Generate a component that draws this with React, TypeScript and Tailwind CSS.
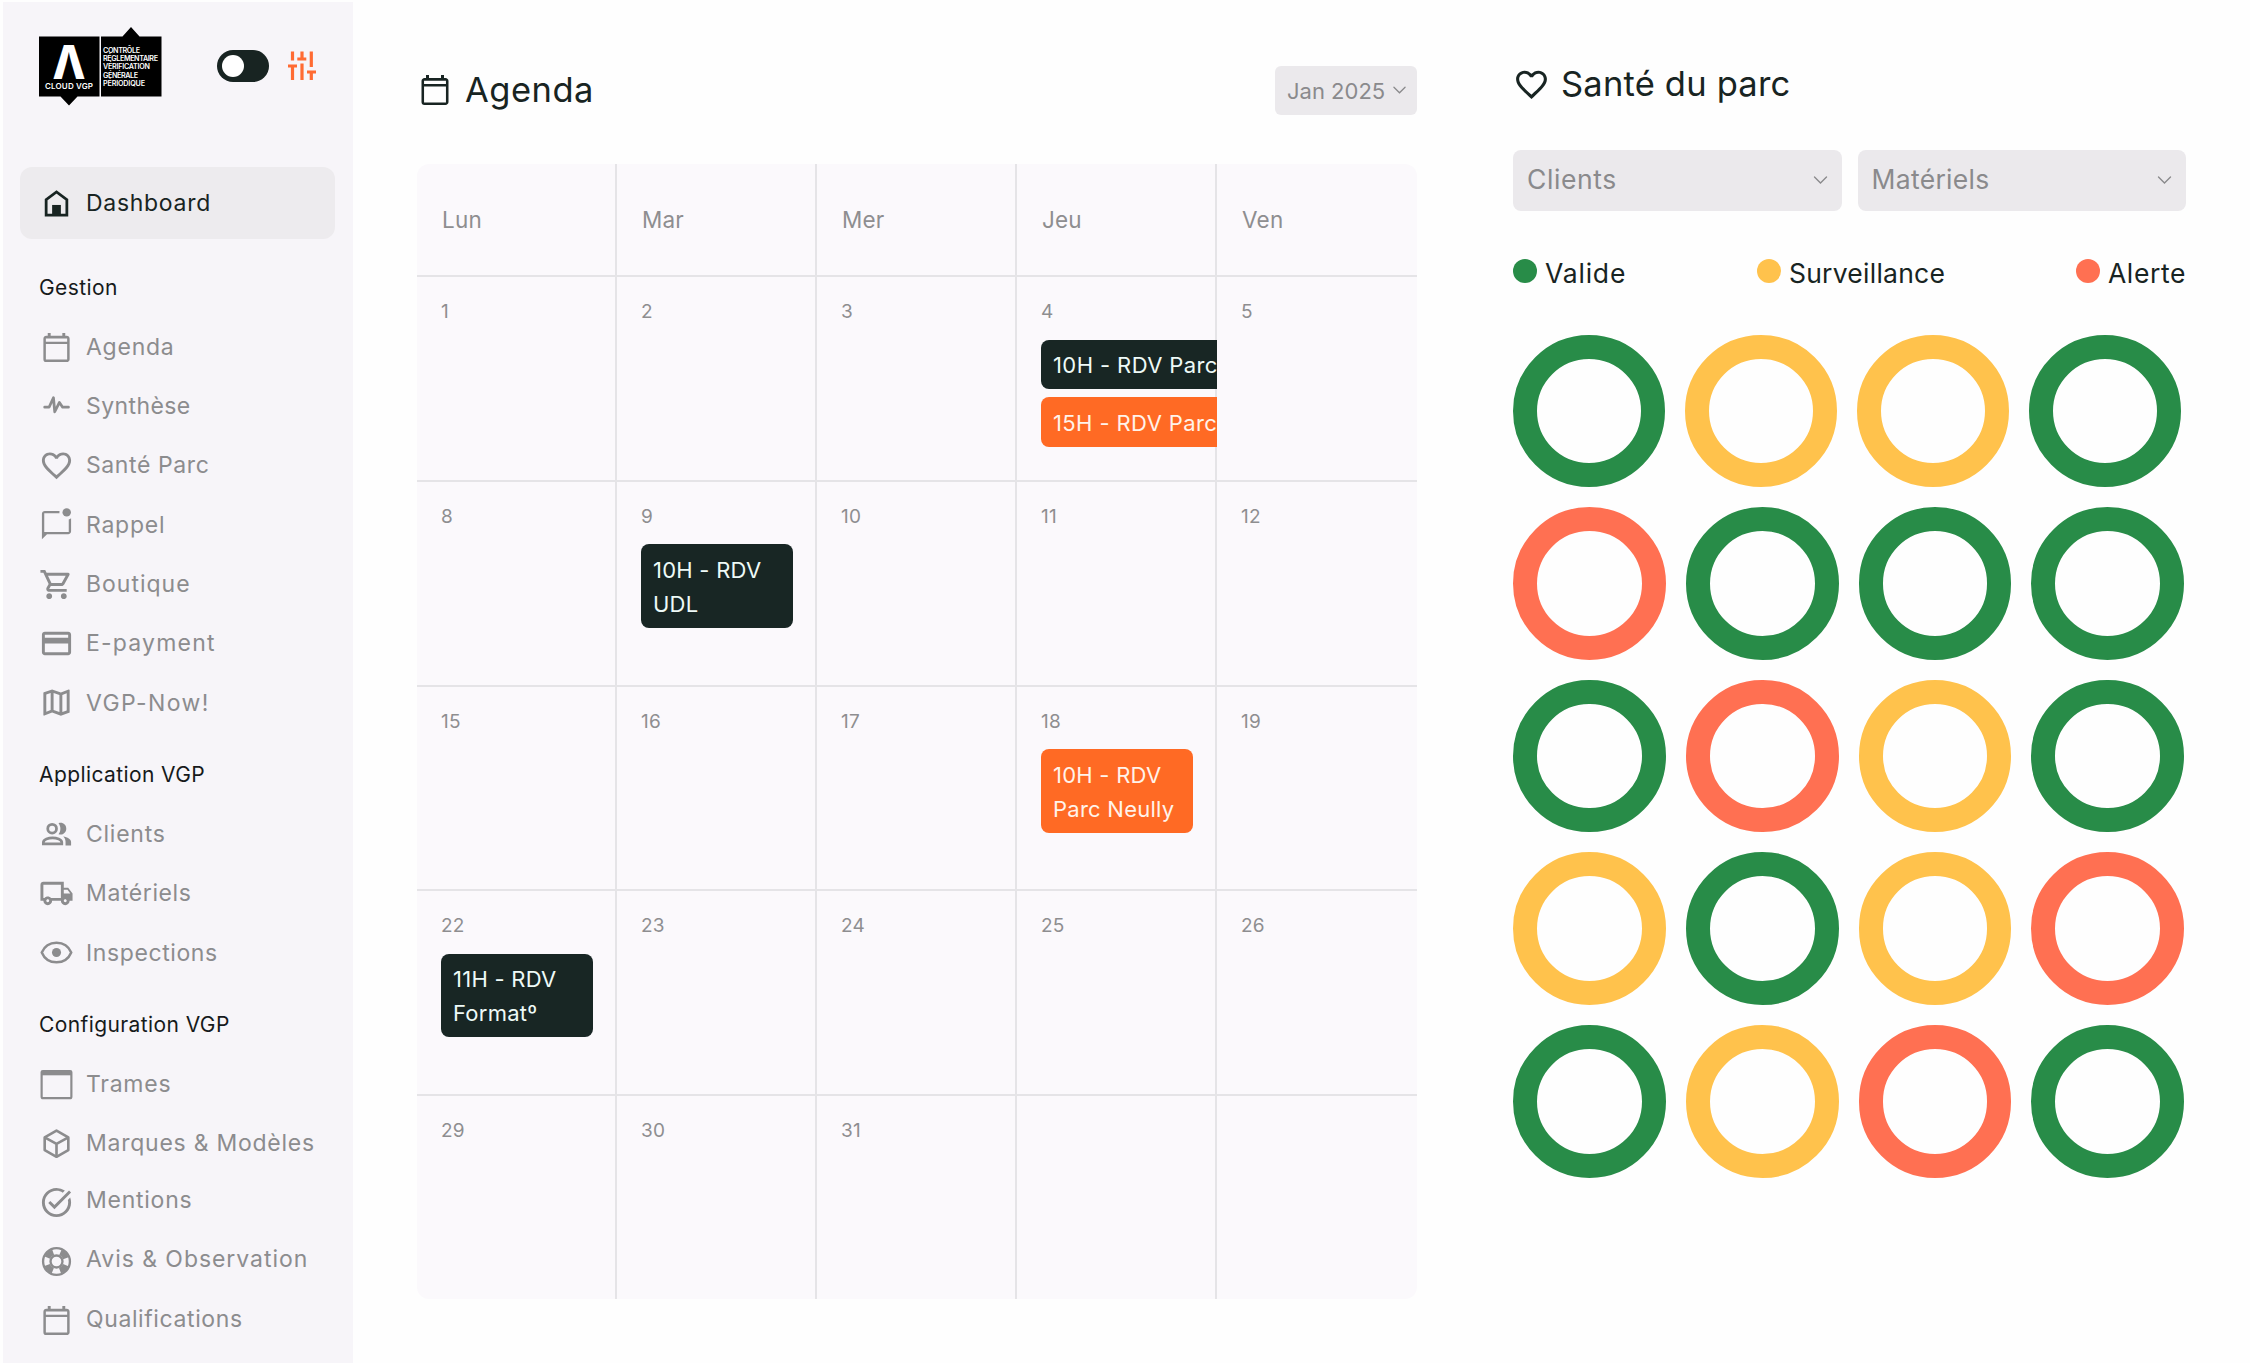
import React from 'react';
import {
  MdFavoriteBorder,
  MdOutlineLocalShipping,
  MdOutlineMap,
  MdOutlinePayment,
  MdOutlineShoppingCart,
  MdTaskAlt,
} from 'react-icons/md';
import clsx from 'clsx';

type IconProps = { className?: string };

function CalendarIcon({ className }: IconProps) {
  return (
    <svg viewBox="0 0 24 24" fill="currentColor" className={className}>
      <path d="M19 4h-1V2h-2v2H8V2H6v2H5c-1.11 0-1.99.9-1.99 2L3 20a2 2 0 0 0 2 2h14c1.1 0 2-.9 2-2V6c0-1.1-.9-2-2-2zm0.3 16.3H4.7V9.6h14.6v10.7zm0-12.3H4.7V5.8h14.6V8z" />
    </svg>
  );
}

function HomeIcon({ className }: IconProps) {
  return (
    <svg viewBox="0 0 24 24" className={className}>
      <path d="M4.900 20V9.400l7.100-5.300 7.100 5.300V20z" fill="none" stroke="currentColor" strokeWidth="1.900" />
      <path d="M9 13h6v7H9z" fill="currentColor" />
    </svg>
  );
}

function PulseIcon({ className }: IconProps) {
  return (
    <svg viewBox="0 0 24 24" fill="none" stroke="currentColor" strokeWidth="1.900" strokeLinejoin="round" strokeLinecap="round" className={className}>
      <path d="M3.900 12.500h3L9.900 6l.9 9.600L14 9.200l2.200 3.300h4" />
    </svg>
  );
}

function ChatIcon({ className }: IconProps) {
  return (
    <svg viewBox="0 0 24 24" fill="currentColor" className={clsx('overflow-visible', className)}>
      <path d="M22 6.980V16c0 1.100-.9 2-2 2H5.500L2 21.500V4c0-1.100.9-2 2-2h10.100c-.06.32-.1.66-.1 1s.04.4.1.600H3.600v12.800h16.800V7.900c.6-.15 1.100-.48 1.600-.92z" />
      <circle cx="19" cy="3" r="2.900" />
    </svg>
  );
}

function PeopleIcon({ className }: IconProps) {
  return (
    <svg viewBox="0 0 24 24" fill="currentColor" className={className}>
      <circle cx="9" cy="8" r="3" fill="none" stroke="currentColor" strokeWidth="1.900" />
      <path d="M3 18.500v-1.200c0-1.900 3.500-3 6.300-3s6.300 1.100 6.300 3v1.200z" fill="none" stroke="currentColor" strokeWidth="1.900" />
      <path d="M13.400 4.200c2.900-.9 5.300 1.200 5.300 3.800s-2.400 4.700-5.300 3.800c1.700-2.300 1.700-5.300 0-7.600z" />
      <path d="M16.600 13.300c3 .5 5.400 1.700 5.400 3.900v2.300h-3.800v-2.600c0-1.500-.6-2.700-1.600-3.600z" />
    </svg>
  );
}

function EyeIcon({ className }: IconProps) {
  return (
    <svg viewBox="0 0 24 24" className={className}>
      <path d="M12 5.300c-4.600 0-8.400 2.600-10.100 6.700 1.700 4.100 5.500 6.700 10.100 6.700s8.400-2.600 10.100-6.700c-1.700-4.100-5.500-6.700-10.100-6.700z" fill="none" stroke="currentColor" strokeWidth="1.700" />
      <circle cx="12" cy="12" r="3.100" fill="currentColor" />
    </svg>
  );
}

function FrameIcon({ className }: IconProps) {
  return (
    <svg viewBox="0 0 24 24" className={className}>
      <rect x="1.800" y="2.800" width="20.400" height="18.600" rx="1" fill="none" stroke="currentColor" strokeWidth="1.500" />
      <path d="M1.500 2.500h21v3.200h-21z" fill="currentColor" />
    </svg>
  );
}

function CubeIcon({ className }: IconProps) {
  return (
    <svg viewBox="0 0 24 24" fill="none" stroke="currentColor" strokeWidth="1.800" strokeLinejoin="round" className={className}>
      <path d="M12 3.200l8.100 4.600v8.700L12 21.100l-8.100-4.600V7.800z" />
      <path d="M4.200 8L12 12.300 19.800 8M12 12.300v8.600" />
    </svg>
  );
}

function BuoyIcon({ className }: IconProps) {
  return (
    <svg viewBox="0 0 24 24" fill="none" stroke="currentColor" className={className}>
      <circle cx="12" cy="12" r="9.200" strokeWidth="1.600" />
      <circle cx="12" cy="12" r="4.100" strokeWidth="1.600" />
      <circle cx="12" cy="12" r="6.800" strokeWidth="4" strokeDasharray="5.600 5.080" strokeDashoffset="-2.540" />
    </svg>
  );
}

function SlidersIcon({ className }: IconProps) {
  return (
    <svg viewBox="0 0 28 29" fill="none" stroke="currentColor" strokeWidth="3.200" className={className}>
      <path d="M4.500 0.500v9M0 15h9M4.500 15v14" />
      <path d="M14 0.500v7M9.300 8h9M14 12.500V29" />
      <path d="M23.300 0.500v15.500M19 21h9M23.300 21v8" />
    </svg>
  );
}

function Chevron({ className }: IconProps) {
  return (
    <svg viewBox="0 0 14 8" fill="none" stroke="currentColor" strokeWidth="1.400" strokeLinecap="round" className={className}>
      <path d="M1 1l6 6 6-6" />
    </svg>
  );
}

function Logo() {
  return (
    <svg viewBox="0 0 123 79" className="h-[79px] w-[123px] font-['Inter']" fill="#fff">
      <path d="M0 9.500h60.500v60H38.500L30 78.500l-8.500-9H0zM62 9.500h21.500L92 0l8.500 9.500H122.500v60H62z" fill="#000" />
      <text x="13.500" y="51.500" fontSize="46" fontWeight="800" textLength="33" lengthAdjust="spacingAndGlyphs">Λ</text>
      <text x="6" y="61.500" fontSize="8" fontWeight="600" textLength="48">CLOUD VGP</text>
      <g fontSize="7.200" fontWeight="600">
        <text x="64" y="25.500" textLength="37">CONTRÔLE</text>
        <text x="64" y="34" textLength="55">RÉGLEMENTAIRE</text>
        <text x="64" y="42.300" textLength="47">VÉRIFICATION</text>
        <text x="64" y="50.700" textLength="35">GÉNÉRALE</text>
        <text x="64" y="59" textLength="42">PÉRIODIQUE</text>
      </g>
    </svg>
  );
}

type Item = {
  label: string;
  icon: React.ComponentType<IconProps>;
  iconShift?: string;
  spacing?: string;
};

const gestion: Item[] = [
  { label: 'Agenda', icon: CalendarIcon },
  { label: 'Synthèse', icon: PulseIcon, spacing: 'tracking-[0.400px]' },
  { label: 'Santé Parc', icon: MdFavoriteBorder, spacing: 'tracking-[0.600px]' },
  { label: 'Rappel', icon: ChatIcon },
  { label: 'Boutique', icon: MdOutlineShoppingCart, spacing: 'tracking-[1px]' },
  { label: 'E-payment', icon: MdOutlinePayment, spacing: 'tracking-[1.200px]' },
  { label: 'VGP-Now!', icon: MdOutlineMap, spacing: 'tracking-[1.400px]' },
];

const application: Item[] = [
  { label: 'Clients', icon: PeopleIcon },
  { label: 'Matériels', icon: MdOutlineLocalShipping, spacing: 'tracking-[0.600px]' },
  { label: 'Inspections', icon: EyeIcon, spacing: 'tracking-[0.600px]' },
];

const configuration: Item[] = [
  { label: 'Trames', icon: FrameIcon },
  { label: 'Marques & Modèles', icon: CubeIcon },
  { label: 'Mentions', icon: MdTaskAlt, iconShift: 'mt-1' },
  { label: 'Avis & Observation', icon: BuoyIcon, iconShift: 'mt-1', spacing: 'tracking-[0.950px]' },
  { label: 'Qualifications', icon: CalendarIcon, iconShift: 'mt-0.5', spacing: 'tracking-[0.600px]' },
];

function NavGroup({ title, items, className }: { title: string; items: Item[]; className?: string }) {
  return (
    <div className={className}>
      <h3 className="h-[58.500px] pl-9 pt-[15px] text-[21px] leading-[28px] tracking-[0.400px] text-[#161a1b]">{title}</h3>
      <ul>
        {items.map(({ label, icon: Icon, iconShift, spacing }) => (
          <li
            key={label}
            className={clsx(
              'flex items-center pl-9 text-[23px] text-[#8c8c8e]',
              label === 'Mentions' ? 'mb-[3px] h-[54px]' : 'h-[59.300px]'
            )}
          >
            <span className={iconShift}>
              <Icon className="size-[35px]" />
            </span>
            <span className={clsx('ml-3', spacing ?? 'tracking-[0.750px]')}>{label}</span>
          </li>
        ))}
      </ul>
    </div>
  );
}

function Sidebar() {
  return (
    <aside className="ml-[3px] mt-[2px] h-[1361px] w-[350px] shrink-0 overflow-hidden bg-[#f7f5f9]">
      <div className="flex h-[165px] items-start pl-9 pt-[25px]">
        <Logo />
        <div className="ml-[55px] mt-[23px] h-8 w-[52px] rounded-full bg-[#182422] p-[5px]">
          <div className="size-[22px] rounded-full bg-white" />
        </div>
        <SlidersIcon className="ml-[19px] mt-[24px] h-[29px] w-[28px] text-[#ff6b33]" />
      </div>
      <div className="ml-[17px] flex h-[72px] w-[315px] items-center rounded-xl bg-[#edebee] pl-[19px] text-[23px] text-[#182422]">
        <HomeIcon className="size-[35px]" />
        <span className="ml-3 tracking-[0.700px]">Dashboard</span>
      </div>
      <NavGroup title="Gestion" items={gestion} className="mt-5" />
      <NavGroup title="Application VGP" items={application} className="mt-[13.500px]" />
      <NavGroup title="Configuration VGP" items={configuration} className="mt-[13.500px]" />
    </aside>
  );
}

type CalEvent = { text: string; color: 'dark' | 'orange'; nowrap?: boolean };

const events: Record<number, CalEvent[]> = {
  4: [
    { text: '10H - RDV Parc', color: 'dark', nowrap: true },
    { text: '15H - RDV Parc', color: 'orange', nowrap: true },
  ],
  9: [{ text: '10H - RDV UDL', color: 'dark' }],
  18: [{ text: '10H - RDV Parc Neully', color: 'orange' }],
  22: [{ text: '11H - RDV Formatº', color: 'dark' }],
};

const weeks = [0, 1, 2, 3, 4].map((w) => [1, 2, 3, 4, 5].map((d) => w * 7 + d));

function Agenda() {
  return (
    <section className="ml-16 w-[1000px] shrink-0">
      <div className="flex h-[164px] items-start justify-between">
        <div className="mt-[65px] flex h-[49px] items-center text-[#182422]">
          <CalendarIcon className="size-9" />
          <h2 className="ml-3 text-[34.500px] tracking-[0.500px]">Agenda</h2>
        </div>
        <button className="mt-[66px] flex h-[49px] w-[142px] items-center rounded-md bg-[#ebe9ec] pl-3 pt-0.5 text-[22px] text-[#8a8a8c]">
          Jan 2025
          <Chevron className="mb-[3px] ml-auto mr-[11px] h-2 w-[13px]" />
        </button>
      </div>

      <div className="h-[1135px] overflow-hidden rounded-xl bg-[#fbf9fc] text-[#8e8e90]">
        <div className="grid h-[113px] grid-cols-5">
          {['Lun', 'Mar', 'Mer', 'Jeu', 'Ven'].map((day) => (
            <div
              key={day}
              className="flex items-center pb-0.5 pl-[25px] text-[22.500px] tracking-[0.200px] shadow-[inset_-2px_-2px_0_#e5e4e7] last:shadow-[inset_0_-2px_0_#e5e4e7]"
            >
              {day}
            </div>
          ))}
        </div>
        {weeks.map((week, i) => (
          <div key={i} className="grid h-[204.750px] grid-cols-5">
            {week.map((day) => (
              <div
                key={day}
                className={clsx(
                  'overflow-hidden pl-6 pt-[20px]',
                  i < 4
                    ? 'shadow-[inset_-2px_-2px_0_#e5e4e7] last:shadow-[inset_0_-2px_0_#e5e4e7]'
                    : 'shadow-[inset_-2px_0_0_#e5e4e7] last:shadow-none'
                )}
              >
                <div className="h-[42.500px] text-[19px] leading-[29px] tracking-[0.200px]">{day <= 31 ? day : ''}</div>
                {(events[day] ?? []).map((event) => (
                  <div
                    key={event.text}
                    className={clsx(
                      'mb-2 rounded-lg pb-[7px] pl-3 pt-[8.500px] text-[22px] leading-[34px]',
                      event.color === 'dark' ? 'bg-[#182624] text-[#eefaf7]' : 'bg-[#ff6a24] text-[#fff3ea]',
                      event.nowrap ? 'w-[200px] whitespace-nowrap tracking-[0.400px]' : 'w-[152px] tracking-[0.250px]'
                    )}
                  >
                    {event.text}
                  </div>
                ))}
              </div>
            ))}
          </div>
        ))}
      </div>
    </section>
  );
}

const ringColors = {
  g: 'border-[#288c48]',
  y: 'border-[#ffc24c]',
  r: 'border-[#ff7052]',
};

const rings: (keyof typeof ringColors)[][] = [
  ['g', 'y', 'y', 'g'],
  ['r', 'g', 'g', 'g'],
  ['g', 'r', 'y', 'g'],
  ['y', 'g', 'y', 'r'],
  ['g', 'y', 'r', 'g'],
];

function FilterSelect({ label, spacing }: { label: string; spacing: string }) {
  return (
    <button className={clsx('flex h-[60.500px] flex-1 items-center rounded-lg bg-[#ebe9ec] px-[14px] text-[26.500px] text-[#8a8a8c]', spacing)}>
      {label}
      <Chevron className="ml-auto h-2 w-[15px]" />
    </button>
  );
}

function ParkHealth() {
  return (
    <section className="ml-24 w-[673px] shrink-0">
      <div className="flex h-[150px] items-start text-[#182422]">
        <div className="mt-[60px] flex h-[48px] items-center">
          <MdFavoriteBorder className="size-[37px]" />
          <h2 className="ml-[11px] text-[34.500px] tracking-[0.200px]">Santé du parc</h2>
        </div>
      </div>
      <div className="flex gap-4">
        <FilterSelect label="Clients" spacing="tracking-[0.600px]" />
        <FilterSelect label="Matériels" spacing="tracking-[0.300px]" />
      </div>
      <div className="mt-[42.500px] flex h-10 justify-between text-[26.500px] leading-10 text-[#182422]">
        <div className="flex tracking-[0.800px]">
          <span className="mr-2 mt-[6px] size-6 rounded-full bg-[#288c48]" />
          Valide
        </div>
        <div className="flex tracking-[0.250px]">
          <span className="mr-2 mt-[6px] size-6 rounded-full bg-[#ffc24c]" />
          Surveillance
        </div>
        <div className="flex tracking-[0.600px]">
          <span className="mr-2 mt-[6px] size-6 rounded-full bg-[#ff7052]" />
          Alerte
        </div>
      </div>
      <div className="mt-[42px] flex flex-col gap-5">
        {rings.map((row, i) => (
          <div key={i} className={clsx('flex', i === 0 ? 'gap-5' : 'gap-[20.150px]')}>
            {row.map((color, j) => (
              <div
                key={j}
                className={clsx('rounded-full border-24', i === 0 ? 'size-[152px]' : 'size-[152.700px]', ringColors[color])}
              />
            ))}
          </div>
        ))}
      </div>
    </section>
  );
}

export default function App() {
  return (
    <div className="flex h-[1363px] w-[2250px] overflow-hidden bg-[#fefefe] font-['Inter',sans-serif]">
      <Sidebar />
      <Agenda />
      <ParkHealth />
    </div>
  );
}
